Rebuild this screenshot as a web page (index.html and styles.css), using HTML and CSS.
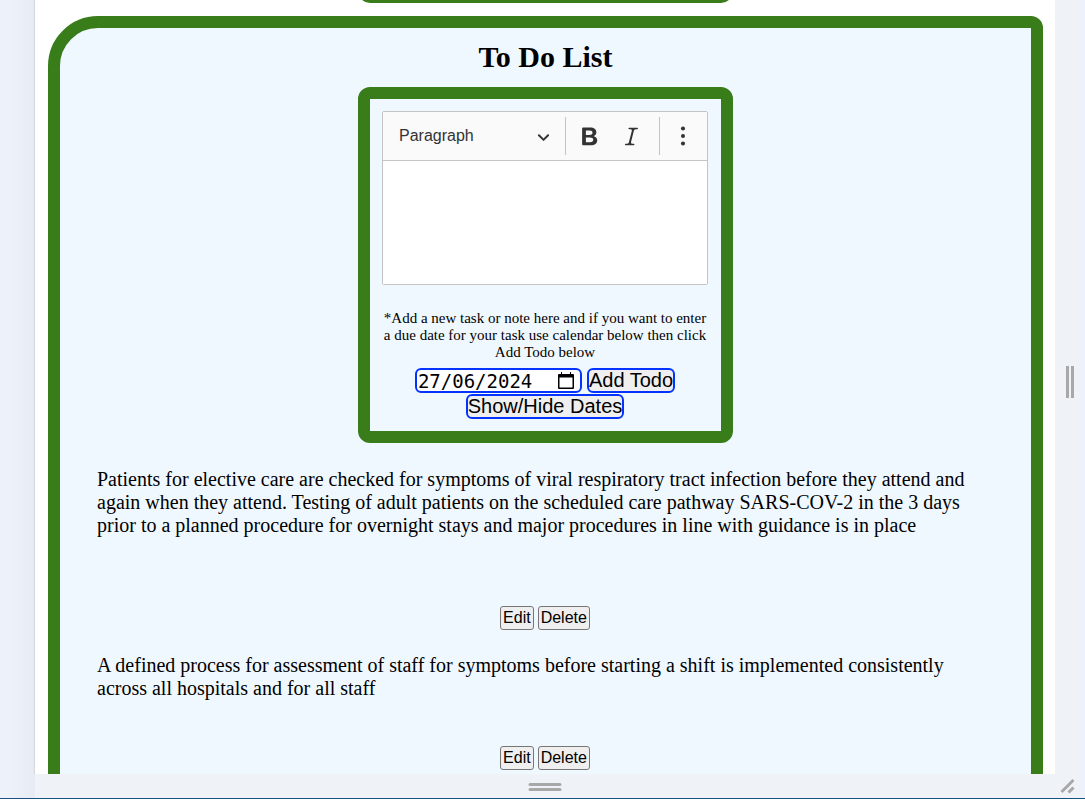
FILE: index.html
```
<!DOCTYPE html>
<html lang="en-GB">
<head>
<meta charset="utf-8">
<title>To Do List</title>
<link rel="stylesheet" href="styles.css">
</head>
<body>
<div class="frame">
  <div class="gutter"></div>
  <main class="pane">
    <div class="previous"><div class="previous-card"></div></div>
    <section class="board">
      <h1 class="title">To Do List</h1>
      <form class="card">
        <div class="editor">
          <div class="toolbar">
            <button type="button" class="heading-picker">
              <span>Paragraph</span>
              <svg class="chevron" viewBox="0 0 10 10"><path d="M.941 4.523a.75.75 0 1 1 1.06-1.06l3.006 3.005 3.005-3.005a.75.75 0 1 1 1.06 1.06l-3.549 3.55a.75.75 0 0 1-1.168-.136L.941 4.523z"/></svg>
            </button>
            <span class="separator"></span>
            <button type="button" class="tool" aria-label="Bold"><svg viewBox="0 0 20 20"><path fill-rule="evenodd" d="M5.2 17c-.7 0-1.1-.4-1.1-1.100V3.800c0-.7.4-1.100 1.100-1.100h5.300c3.200 0 5 1.500 5 3.900 0 1.500-.9 2.700-2.200 3.100 1.800.4 2.900 1.600 2.900 3.300 0 2.500-1.900 4-5.200 4H5.200zM7.100 8.800h2.700c1.700 0 2.600-.6 2.600-1.800 0-1.100-.8-1.800-2.300-1.800h-3v3.600zm0 5.700h3.200c1.800 0 2.700-.6 2.700-1.900 0-1.300-1-1.900-2.900-1.900h-3v3.800z"/></svg></button>
            <button type="button" class="tool" aria-label="Italic"><svg viewBox="0 0 20 20"><path d="m9.586 14.633.021.004c-.036.335.095.655.393.962.082.083.173.15.274.201h1.474a.6.6 0 1 1 0 1.200H5.304a.6.6 0 0 1 0-1.200h1.150c.474-.07.809-.182 1.005-.334.157-.122.291-.320.404-.597l2.416-9.550a1.053 1.053 0 0 0-.281-.823 1.120 1.120 0 0 0-.442-.296H8.150a.6.6 0 0 1 0-1.200h6.443a.6.6 0 1 1 0 1.200h-1.195c-.376.056-.650.155-.823.296-.215.175-.423.439-.623.790l-2.366 9.347z"/></svg></button>
            <span class="separator"></span>
            <button type="button" class="tool more" aria-label="Show more items"><svg viewBox="0 0 20 20"><circle cx="10" cy="3.700" r="1.700"/><circle cx="10" cy="10" r="1.700"/><circle cx="10" cy="16.300" r="1.700"/></svg></button>
          </div>
          <textarea class="content" aria-label="Task text"></textarea>
        </div>
        <p class="note">*Add a new task or note here and if you want to enter a due date for your task use calendar below then click Add Todo below</p>
        <div class="actions">
          <div class="date">
            <input class="date-text" type="text" value="27/06/2024" aria-label="Due date">
            <button type="button" class="calendar" aria-label="Show date picker"><svg viewBox="0 0 18 18"><path fill-rule="evenodd" d="M4 0h1v2h8V0h1v2h2q1 0 1 1v13q0 1-1 1H2q-1 0-1-1V3q0-1 1-1h2zM2.500 5.500v10h13v-10z"/></svg></button>
          </div>
          <button type="button" class="action">Add Todo</button>
          <button type="button" class="action">Show/Hide Dates</button>
        </div>
      </form>
      <article class="task">
        <p class="task-text">Patients for elective care are checked for symptoms of viral respiratory tract infection before they attend and again when they attend. Testing of adult patients on the scheduled care pathway SARS-COV-2 in the 3 days prior to a planned procedure for overnight stays and major procedures in line with guidance is in place</p>
        <div class="task-buttons"><button class="small">Edit</button><button class="small">Delete</button></div>
      </article>
      <article class="task">
        <p class="task-text">A defined process for assessment of staff for symptoms before starting a shift is implemented consistently across all hospitals and for all staff</p>
        <div class="task-buttons"><button class="small">Edit</button><button class="small">Delete</button></div>
      </article>
    </section>
  </main>
  <div class="side"><svg class="grip-v" viewBox="0 0 10 34"><path d="M2.500 1v32M7.500 1v32"/></svg></div>
  <div class="foot"><svg class="grip-h" viewBox="0 0 34 10"><path d="M2 2.500h30M2 7.500h30"/></svg></div>
  <div class="corner"><svg class="grip-c" viewBox="0 0 18 18"><path d="M2.500 15 14.500 3M9.500 15.500l5-5"/></svg></div>
</div>
</body>
</html>
```
FILE: styles.css
```
* { box-sizing: border-box; }
body { margin: 0; background: #edf1fa; color: #000; font-family: "Liberation Serif", "Times New Roman", serif; }
button { margin: 0; color: #000; font-family: "Liberation Sans", Arial, sans-serif; }
.frame {
  display: grid;
  grid-template-columns: 35px minmax(0, 1fr) 30px;
  grid-template-rows: minmax(0, 1fr) 24px;
  height: 100vh;
  border-bottom: 1px solid #16537e;
}
.gutter { grid-row: 1 / 3; background: linear-gradient(to right, #edf1fa 30%, #e7ebf4); }
.pane { overflow: hidden; background: #fff; padding: 0 12px 0 13px; box-shadow: -1px 0 1px #d5d8df; }
.side { display: flex; align-items: center; justify-content: center; padding-right: 1px; padding-bottom: 10px; background: linear-gradient(to left, #edf1fb 5px, #eff3f8 5px); }
.foot { display: flex; justify-content: center; align-items: center; padding-top: 2px; background: #eff3f8; }
.corner { display: flex; align-items: center; justify-content: flex-start; padding-left: 4px; background: #eff3f8; border-right: 5px solid #edf1fb; }
.grip-v, .grip-h, .grip-c { fill: none; stroke: #a7a8a8; stroke-width: 3; }
.grip-v { width: 10px; height: 34px; }
.grip-h { width: 34px; height: 10px; stroke-linecap: round; }
.grip-c { width: 18px; height: 18px; flex: none; }

.previous { display: flex; justify-content: center; align-items: flex-end; height: 3px; overflow: hidden; }
.previous-card { flex: none; width: 375px; height: 24px; background: #397d1b; border-radius: 12px; }
.board { margin-top: 13px; padding: 12px 37px 60px; border: 12px solid #397d1b; border-radius: 50px 12px 12px 12px; background: #f0f8ff; }
.title { margin: 0 0 13px; font-size: 30px; line-height: 34px; text-align: center; }
.card { width: 375px; max-width: 100%; margin: 0 auto; padding: 12px 13px 12px 12px; border: 12px solid #397d1b; border-radius: 12px; }

.editor { border: 1px solid #c4c4c4; border-radius: 2px; background: #fff; }
.toolbar { display: flex; align-items: center; height: 49px; border-bottom: 1px solid #c4c4c4; background: #fafafa; }
.heading-picker { display: flex; flex: 1; align-items: center; justify-content: space-between; padding: 0 15px 0 16px; border: 0; background: none; color: #333; font-size: 16px; line-height: 20px; }
.chevron { width: 13px; height: 13px; fill: #333; }
.separator { width: 1px; height: 38px; background: #c4c4c4; }
.tool { display: flex; align-items: center; justify-content: center; width: 42px; height: 40px; padding: 0; border: 0; background: none; }
.tool svg { width: 25px; height: 25px; fill: #333; }
.separator + .tool { margin-left: 2px; }
.tool + .separator { margin-left: 7px; }
.separator + .more { margin-left: 0; width: 47px; }
.more svg { width: 24px; height: 24px; }
.more { padding-right: 1px; }
.content { display: block; width: 100%; height: 123px; padding: 0 10px; border: 0; outline: 0; background: #fff; resize: none; font: 16px "Liberation Sans", sans-serif; }

.note { margin: 25px 0 7px; font-size: 15px; line-height: 17px; text-align: center; }
.actions { display: flex; flex-wrap: wrap; justify-content: center; align-items: center; column-gap: 5px; row-gap: 1px; }
.date { display: flex; align-items: center; width: 167px; height: 25px; padding: 0 5px 0 1px; border: 2px solid #0433ff; border-radius: 6px; background: #fff; }
.date-text { flex: 1; min-width: 0; padding: 0; border: 0; outline: 0; background: none; color: #000; font: 19px "DejaVu Sans Mono", monospace; }
.calendar { flex: none; width: 18px; height: 18px; padding: 0; border: 0; background: none; }
.calendar svg { display: block; width: 18px; height: 18px; }
.action { height: 25px; padding: 0; border: 2px solid #0433ff; border-radius: 6px; background: #efefef; font-size: 20px; line-height: 21px; }

.task-text { min-height: 46px; margin: 0; font-size: 20px; line-height: 23px; }
.task { padding-top: 25px; }
.task + .task { padding-top: 24px; }
.task-buttons { display: flex; justify-content: center; gap: 4px; margin-top: 69px; padding-right: 1px; }
.task + .task .task-buttons { margin-top: 46px; }
.small { height: 24px; padding: 0 2px; border: 1px solid #767676; border-radius: 3px; background: #efefef; font-size: 16px; line-height: 20px; }
```
